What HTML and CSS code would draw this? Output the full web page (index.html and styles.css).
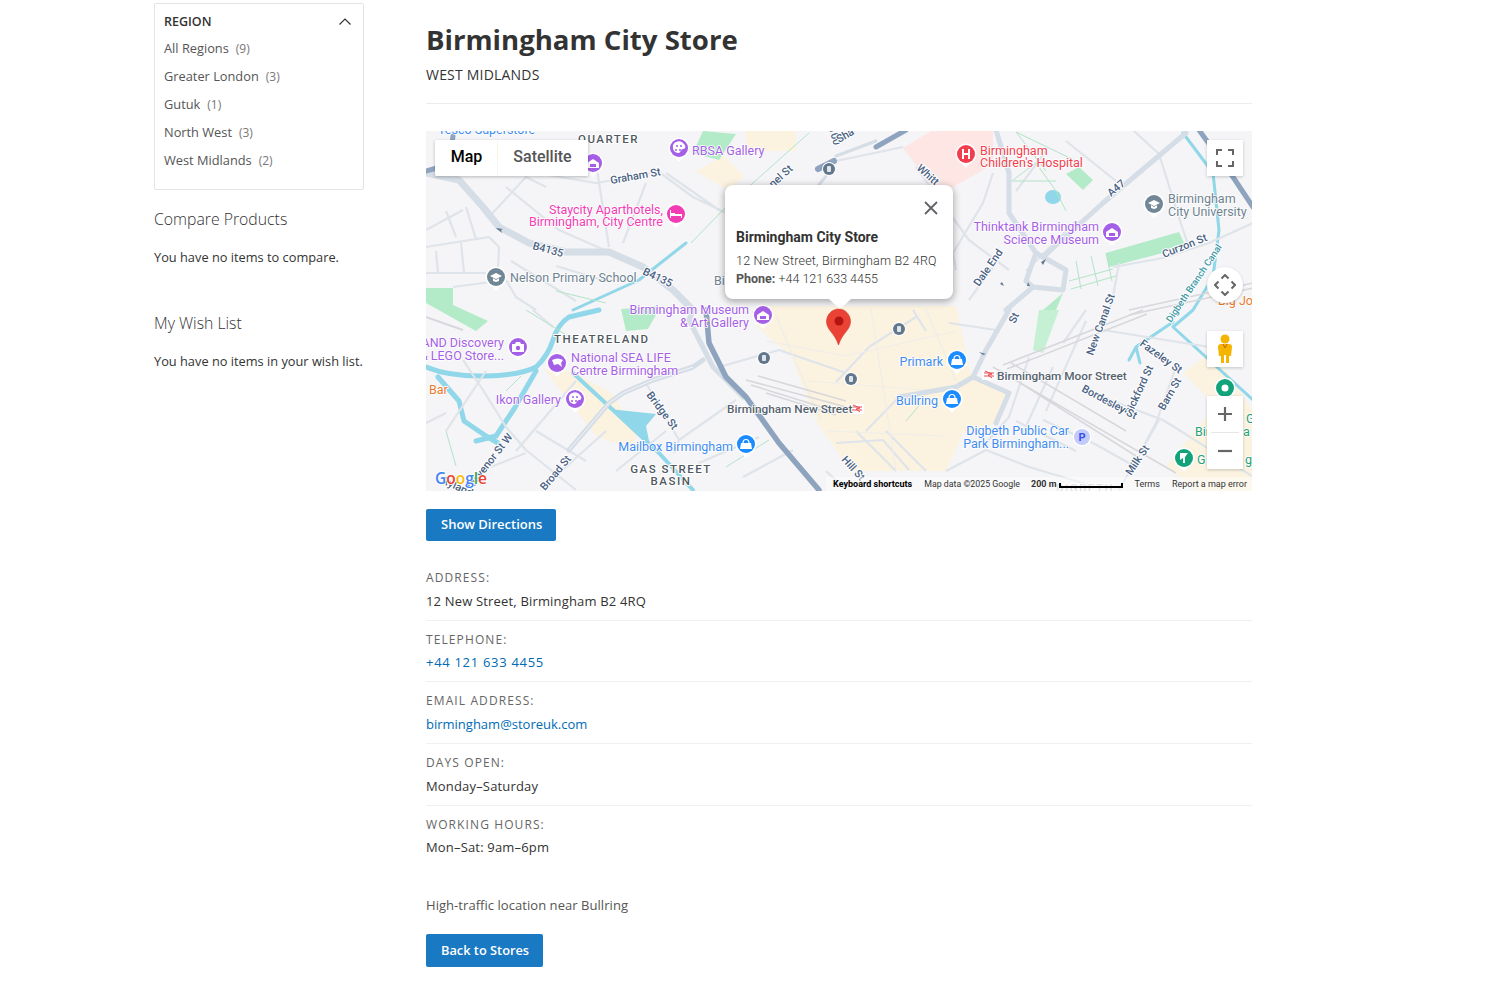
FILE: index.html
```html
<!DOCTYPE html>
<html lang="en">
<head>
<meta charset="utf-8">
<title>Birmingham City Store</title>
<link rel="stylesheet" href="styles.css">
</head>
<body>
<div class="page">
  <aside class="sidebar">
    <section class="filter">
      <div class="filter-head">
        <span>REGION</span>
        <svg class="chev" width="12" height="7" viewBox="0 0 12 7"><path d="M.5 6.500 6 1l5.500 5.500" fill="none" stroke="#333" stroke-width="1.200"/></svg>
      </div>
      <ul class="filter-list">
        <li>All Regions<span class="count">(9)</span></li>
        <li>Greater London<span class="count">(3)</span></li>
        <li>Gutuk<span class="count">(1)</span></li>
        <li>North West<span class="count">(3)</span></li>
        <li>West Midlands<span class="count">(2)</span></li>
      </ul>
    </section>
    <section class="side-block">
      <h3>Compare Products</h3>
      <p>You have no items to compare.</p>
    </section>
    <section class="side-block wish">
      <h3>My Wish List</h3>
      <p>You have no items in your wish list.</p>
    </section>
  </aside>
  <main class="main">
    <h1>Birmingham City Store</h1>
    <div class="region">WEST MIDLANDS</div>
    <hr class="rule">
    <div class="map">
      <svg class="map-art" width="826" height="360" viewBox="0 0 826 360">
        <defs>
          <symbol id="pin" viewBox="-12 -12 24 28" overflow="visible">
            <path d="M-10.500 0a10.500 10.500 0 1 1 21 0c0 5.500-4 9-7 10L0 14l-3.500-4c-3-1-7-4.500-7-10z" fill="#fff"/>
          </symbol>
        </defs>
        <rect width="826" height="360" fill="#f5f4f6"/>
        <!-- land use -->
        <g fill="#fbf3e0">
          <path d="M340 175H530l15 70 38 17-13 30-33 10-17 38H425l-35-50-25-65-35-30z"/>
          <path d="M118 238l27 2 40 22 25 38v20l-40-15z"/>
          <path d="M270 40l28-15 20 20-15 15zM70 15h18v16H70zM320 0h50v20h-50z"/>
          <path d="M783 222 757 242 790 275 740 335 770 360H827V280L800 240z"/>
        </g>
        <path d="M477 17 507-1H567V33L527 56H507z" fill="#fde6e3"/>
        <g fill="#b3ebc9">
          <path d="M277 0 310 3 293 29 267 22z"/>
          <path d="M0 157H27V174L62 190 50 200 0 172z"/>
          <path d="M640 43 653 36 667 49 657 59z"/>
          <path d="M680 122 753 101 760 116 683 136z"/>
          <path d="M617 179 637 162 630 179z"/>
          <path d="M195 178 235 175 222 198 200 200z"/>
        </g>
        <path d="M613 179H633L617 222 607 219z" fill="#c6f0d4"/>
        <!-- water -->
        <g fill="none" stroke="#90d7e9" stroke-linecap="round" stroke-linejoin="round">
          <path stroke-width="5" d="M0 236Q25 246 60 245T110 236Q122 225 127 209T143 186L173 179"/>
          <path stroke-width="5" d="M12 246 33 270 38 290 60 305 72 312M110 240 88 278 70 305 50 310"/>
          <path stroke-width="4" d="M147 242 187 279 233 322 267 359"/>
          <path stroke-width="3" d="M147 179 213 149 260 112"/>
          <path stroke-width="3" d="M757 2 787 42 793 99 787 146 767 179 747 196 827 269"/>
          <path stroke-width="3" d="M747 191 710 216 703 229M710 216 714 232"/>
        </g>
        <path d="M183 278 230 283 220 295 224 315 203 292z" fill="#90d7e9"/>
        <ellipse cx="627" cy="66" rx="8" ry="7" fill="#90d7e9"/>
        <!-- minor streets -->
        <g fill="none" stroke="#dfe4ea" stroke-width="2.200" stroke-linejoin="round">
          <path d="M110 42 170 52 233 41 267 66 300 82M170 32 183 116M63 86 100 46 120 56M80 56 133 99 183 121M0 99 37 79M220 52 197 112M240 42 293 79M0 116 63 106 73 116 72 139M0 142 60 142M80 149 90 166 110 179M27 156 80 149M20 80 30 106M40 76 50 108M10 120 12 142M35 112 38 142M85 130 150 170M130 135 180 150"/>
          <path d="M0 186 37 199M127 196 107 179M37 229 57 259 80 296 100 319 150 359M0 292 20 282M100 322 57 339 40 359M220 252 253 309M248 322 253 309 310 269M273 332 333 306M317 346 367 319M293 236 353 219 420 242M190 340 240 300M160 330 110 300M60 240 20 300M150 250 90 320M180 300 130 345"/>
          <path d="M490 36 543 109 583 139M477 16 410 30M567 42 557 72 527 122 530 139M570 132 543 169M707-1 733 23 757 99 763 116M693 132 687 166 680 190M687 136 737 127 783 112 827 92M620 20 590 60M640 10 690 50M650 90 600 140"/>
          <path d="M523 192 570 199M487 179 500 200M443 216 410 251M490 186 443 216M530 256 473 266 440 300M603 226 583 286 560 312M627 236 597 302M637 212 660 179M677 199 783 216M750 236 730 292 703 342M657 259 737 289 826 345M617 289 667 312 710 336M560 319 603 336 670 356M410 312 457 309 483 339M733 289 693 359M520 340 560 319"/>
          <path d="M660 190 620 280M590 290 650 320M400 340 420 359M430 300 470 340M460 300 500 340"/>
        </g>
        <g fill="none" stroke="#efedea" stroke-width="1.200">
          <path d="M340 210 420 225 530 200M380 250 510 260M400 300 520 305M445 178 470 340M500 178 530 250M350 185 395 290"/>
        </g>
        <g fill="none" stroke="#b2e4c8" stroke-width="1">
          <path d="M265 112 300 76 383 2M587 49 610 32 630 60 640 80M590 1 620 40M584 50 630 50M590 1 650 30"/>
          <path d="M643 150 687 138M645 158 690 145M650 130 655 158M665 125 672 155M680 122 686 150"/>
          <path d="M130 160 180 172M100 179 150 210M300 336 343 309M95 245 80 260M30 335 20 300M497 270 480 290"/>
        </g>
        <!-- railway -->
        <g fill="none" stroke="#d7d7dc" stroke-width="1.500">
          <path d="M320 249 420 276M325 254 415 282M332 245 420 270M340 262 410 284"/>
          <path d="M577 234 717 179M581 238 721 183M567 236 710 319 750 342M575 240 710 325M585 232 700 300"/>
          <path d="M703 179 827 152M703 184 827 157M0 186 37 199"/>
        </g>
        <!-- arterial roads -->
        <g fill="none" stroke="#d5dde6" stroke-linejoin="round" stroke-linecap="round">
          <path stroke-width="7" d="M0 42 33 49 57 76 73 96 103 112 140 121 183 121 217 136 247 159 267 179"/>
          <path stroke-width="5" d="M267 179 263 189 287 236 317 266"/>
          <path stroke-width="5" d="M617 126 677 72 760 2"/>
          <path stroke-width="5" d="M570-1 583 42 583 82 610 122 617 126 640 139 637 159 607 156 580 179M610 122 600 150 607 156"/>
          <path stroke-width="5" d="M583 179 560 219 547 246 583 262 570 292M547 246 530 256 473 266"/>
          <path stroke-width="5" d="M143 319 183 272 197 262 227 249 267 236 277 229"/>
          <path stroke-width="3" d="M410 25 450 10M400 45 380 70 370 85"/>
        </g>
        <path d="M143 319 183 272 197 262 227 249 267 236" fill="none" stroke="#f5f4f6" stroke-width="1"/>
        <g fill="none" stroke="#8ea3be" stroke-linejoin="round" stroke-linecap="round">
          <path stroke-width="5.500" d="M280 179 283 212 300 246 320 266 353 312 393 359"/>
          <path stroke-width="5" d="M450 16 480-1"/>
          <path stroke-width="5" d="M773-1 807 46 827 76"/>
          <path stroke-width="5" d="M0 40 14 36 25 20 27 5"/>
          <path stroke-width="6" d="M392 38 408 30"/>
        </g>
        <g fill="#637a92">
          <path d="M70 97l7 1-2 1 1 3-5-4zM620 128l-3 6-2-3zM578 155l-4-2 2-2zM604 155h-3l1-4zM553 221l7 2-3 1zM570 242l7 2-3 1z"/>
        </g>

        <!-- road labels -->
        <g class="road">
          <text transform="translate(185 53) rotate(-10)">Graham St</text>
          <text transform="translate(106 118) rotate(15)">B4135</text>
          <text transform="translate(216 143) rotate(25)">B4135</text>
          <text transform="translate(490 38) rotate(42)">Whitt</text>
          <text transform="translate(685 66) rotate(-40)">A47</text>
          <text transform="translate(738 127) rotate(-22)">Curzon St</text>
          <text transform="translate(553 156) rotate(-55)">Dale End</text>
          <text transform="translate(667 225) rotate(-70)">New Canal St</text>
          <text transform="translate(713 214) rotate(36)">Fazeley St</text>
          <text transform="translate(705 285) rotate(-65)">Pickford St</text>
          <text transform="translate(738 280) rotate(-60)">Barn St</text>
          <text transform="translate(655 260) rotate(28)">Bordesley St</text>
          <text transform="translate(705 345) rotate(-56)">Milk St</text>
          <text transform="translate(415 329) rotate(48)">Hill St</text>
          <text transform="translate(220 264) rotate(53)">Bridge St</text>
          <text transform="translate(119 360) rotate(-50)">Broad St</text>
          <text transform="translate(41 365) rotate(-52)">Grosvenor St W</text>
          <text transform="translate(15 352) rotate(25)">Ryland</text>
          <text transform="translate(403 -3) rotate(75)">100</text>
          <text transform="translate(413 12) rotate(-30)">Sha</text>
          <text transform="translate(347 57) rotate(-42)">nel St</text>
          <text transform="translate(589 193) rotate(-65)">St</text>
        </g>
        <text class="road canal" transform="translate(745 192) rotate(-56)">Digbeth Branch Canal</text>

        <!-- district labels -->
        <g class="district">
          <text x="152" y="12">QUARTER</text>
          <text x="128" y="212">THEATRELAND</text>
          <text x="245" y="342" text-anchor="middle">GAS STREET</text>
          <text x="245" y="354" text-anchor="middle">BASIN</text>
          <text class="faint" x="630" y="361">DIGBETH</text>
        </g>

        <!-- POI: purple -->
        <g class="poi purple">
          <use href="#pin" x="241" y="5" width="24" height="28"/><circle cx="253" cy="17" r="9"/>
          <use href="#pin" x="155" y="20" width="24" height="28"/><circle cx="167" cy="32" r="9"/>
          <use href="#pin" x="674" y="89" width="24" height="28"/><circle cx="686" cy="101" r="9"/>
          <use href="#pin" x="325" y="172" width="24" height="28"/><circle cx="337" cy="184" r="9"/>
          <use href="#pin" x="80" y="204" width="24" height="28"/><circle cx="92" cy="216" r="9"/>
          <use href="#pin" x="119" y="220" width="24" height="28"/><circle cx="131" cy="232" r="9"/>
          <use href="#pin" x="137" y="256" width="24" height="28"/><circle cx="149" cy="268" r="9"/>
        </g>
        <g fill="#fff">
          <path d="M247 17a6 5.500 0 0 1 11-4c2 2 2 5-1 5-2 0-2 3-4 4-3 0-6-2-6-5z"/>
          <path d="M143 268a6 5.500 0 0 1 11-4c2 2 2 5-1 5-2 0-2 3-4 4-3 0-6-2-6-5z"/>
          <path d="M161 32l6-4 6 4v5h-12zM680 101l6-4 6 4v5h-12zM331 184l6-4 6 4v5h-12z"/>
          <path d="M86 213h3l1-2h4l1 2h3v8H86z"/>
          <path d="M126 229q6-3 11 0l-2 3 1 4-4-3-4 1z"/>
        </g>
        <g fill="#a55fe6">
          <circle cx="251" cy="15" r="1"/><circle cx="255" cy="15" r="1"/><circle cx="250" cy="19" r="1"/><circle cx="254" cy="19" r="1"/>
          <circle cx="147" cy="266" r="1"/><circle cx="151" cy="266" r="1"/><circle cx="146" cy="270" r="1"/><circle cx="150" cy="270" r="1"/>
          <rect x="164" y="33" width="6" height="3"/><rect x="683" y="102" width="6" height="3"/><rect x="334" y="185" width="6" height="3"/>
          <circle cx="92" cy="217" r="2.200"/>
        </g>
        <!-- POI: other colours -->
        <g class="poi pink"><use href="#pin" x="238" y="71" width="24" height="28"/><circle cx="250" cy="83" r="9"/></g>
        <path d="M244 79v8h1v-2h10v2h1v-4h-7v-1h-4v-3z" fill="#fff"/>
        <g class="poi red"><use href="#pin" x="528" y="11" width="24" height="28"/><circle cx="540" cy="23" r="9"/></g>
        <path d="M536 18h2v4h4v-4h2v10h-2v-4h-4v4h-2z" fill="#fff"/>
        <g class="poi grey">
          <use href="#pin" x="716" y="61" width="24" height="28"/><circle cx="728" cy="73" r="9"/>
          <use href="#pin" x="58" y="134" width="24" height="28"/><circle cx="70" cy="146" r="9"/>
        </g>
        <path d="M722 72l6-3 6 3-6 3zM725 74v3l3 1 3-1v-3l-3 2zM64 145l6-3 6 3-6 3zM67 147v3l3 1 3-1v-3l-3 2z" fill="#fff"/>
        <g class="poi blue">
          <use href="#pin" x="308" y="301" width="24" height="28"/><circle cx="320" cy="313" r="9"/>
          <use href="#pin" x="519" y="217" width="24" height="28"/><circle cx="531" cy="229" r="9"/>
          <use href="#pin" x="514" y="256" width="24" height="28"/><circle cx="526" cy="268" r="9"/>
        </g>
        <path d="M315 312h10l1 6h-12zM526 228h10l1 6h-12zM521 267h10l1 6h-12z" fill="#fff"/>
        <path d="M317 312a3 3.500 0 0 1 6 0M528 228a3 3.500 0 0 1 6 0M523 267a3 3.500 0 0 1 6 0" fill="none" stroke="#fff" stroke-width="1.200"/>
        <g class="poi green">
          <use href="#pin" x="787" y="245" width="24" height="28"/><circle cx="799" cy="257" r="9"/>
          <use href="#pin" x="746" y="315" width="24" height="28"/><circle cx="758" cy="327" r="9"/>
        </g>
        <circle cx="799" cy="257" r="3.500" fill="#fff"/>
        <path d="M754 322h8l-3 4v6h-2v-5l-3 2z" fill="#fff"/>
        <circle cx="656" cy="306" r="9.500" fill="#fff"/><circle cx="656" cy="306" r="8" fill="#c2cbfa"/>
        <text class="p-mark" x="656" y="310" text-anchor="middle">P</text>
        <!-- small transit badges -->
        <g fill="#fff">
          <circle cx="403" cy="38" r="7"/><circle cx="473" cy="198" r="7"/><circle cx="338" cy="227" r="7"/><circle cx="425" cy="248" r="7"/>
        </g>
        <g fill="#62778c">
          <circle cx="403" cy="38" r="6"/><circle cx="473" cy="198" r="6"/><circle cx="338" cy="227" r="6"/><circle cx="425" cy="248" r="6"/>
        </g>
        <g fill="#dfe5ea">
          <rect x="401" y="35" width="4" height="6" rx="1"/><rect x="471" y="195" width="4" height="6" rx="1"/><rect x="336" y="224" width="4" height="6" rx="1"/><rect x="423" y="245" width="4" height="6" rx="1"/>
        </g>
        <!-- rail -->
        <rect x="424" y="273" width="14" height="10" fill="#fff"/><rect x="556" y="239" width="14" height="10" fill="#fff"/>
        <path d="M426 276h10M426 279h10M427 274l7 3-4 1 4 3M558 242h10M558 245h10M559 240l7 3-4 1 4 3" fill="none" stroke="#e84a50" stroke-width="1"/>

        <!-- POI labels -->
        <g class="lbl t-purple">
          <text x="266" y="24">RBSA Gallery</text>
          <text x="673" y="100" text-anchor="end">Thinktank Birmingham</text>
          <text x="673" y="113" text-anchor="end">Science Museum</text>
          <text x="323" y="183" text-anchor="end">Birmingham Museum</text>
          <text x="323" y="196" text-anchor="end">&amp; Art Gallery</text>
          <text x="78" y="216" text-anchor="end">LEGOLAND Discovery</text>
          <text x="78" y="229" text-anchor="end">&amp; LEGO Store...</text>
          <text x="145" y="231">National SEA LIFE</text>
          <text x="145" y="244">Centre Birmingham</text>
          <text x="135" y="273" text-anchor="end">Ikon Gallery</text>
        </g>
        <g class="lbl t-pink">
          <text x="237" y="83" text-anchor="end">Staycity Aparthotels,</text>
          <text x="237" y="95" text-anchor="end">Birmingham, City Centre</text>
        </g>
        <g class="lbl t-red">
          <text x="554" y="24">Birmingham</text>
          <text x="554" y="36">Children's Hospital</text>
        </g>
        <g class="lbl t-grey">
          <text x="742" y="72">Birmingham</text>
          <text x="742" y="85">City University</text>
          <text x="84" y="151">Nelson Primary School</text>
          <text x="288" y="154">Bi</text>
        </g>
        <g class="lbl t-blue">
          <text x="12" y="3">Tesco Superstore</text>
          <text x="307" y="320" text-anchor="end">Mailbox Birmingham</text>
          <text x="517" y="235" text-anchor="end">Primark</text>
          <text x="512" y="274" text-anchor="end">Bullring</text>
          <text x="643" y="304" text-anchor="end">Digbeth Public Car</text>
          <text x="643" y="317" text-anchor="end">Park Birmingham...</text>
        </g>
        <g class="lbl t-orange">
          <text x="3" y="263">Bar</text>
          <text x="792" y="174">Big Jo</text>
        </g>
        <g class="lbl t-green">
          <text x="769" y="305">Bir</text>
          <text x="771" y="333">G</text>
          <text x="820" y="292">G</text>
          <text x="817" y="305">a</text>
          <text x="819" y="333">g</text>
        </g>
        <g class="lbl t-rail">
          <text x="571" y="249">Birmingham Moor Street</text>
          <text x="301" y="282">Birmingham New Street</text>
        </g>

        <text class="glogo" x="9" y="353"><tspan fill="#4285f4">G</tspan><tspan fill="#ea4335">o</tspan><tspan fill="#fbbc05">o</tspan><tspan fill="#4285f4">g</tspan><tspan fill="#34a853">l</tspan><tspan fill="#ea4335">e</tspan></text>
        <!-- pin -->
        <path d="M413 178c-7 0-12.500 5.500-12.500 12.500 0 8.500 8 11 12 23.500 4-12.500 12-15 12-23.500 0-7-5.500-12.500-11.500-12.500z" fill="#ea4335" stroke="#d33a2c" stroke-width=".6"/>
        <circle cx="413" cy="190" r="4.500" fill="#b31412"/>
      </svg>

      <div class="map-type">
        <span class="mt-btn mt-active">Map</span>
        <span class="mt-btn mt-sat">Satellite</span>
      </div>
      <button class="ctl ctl-full" aria-label="Fullscreen">
        <svg width="18" height="18" viewBox="0 0 18 18"><path d="M1 6V1h5M12 1h5v5M17 12v5h-5M6 17H1v-5" fill="none" stroke="#666" stroke-width="2"/></svg>
      </button>
      <div class="ctl-move">
        <svg width="22" height="22" viewBox="0 0 22 22"><path d="M7.500 4.500 11 1l3.500 3.500M17.500 7.500 21 11l-3.500 3.500M14.500 17.500 11 21l-3.500-3.500M4.500 14.500 1 11l3.500-3.500" fill="none" stroke="#666" stroke-width="2"/></svg>
      </div>
      <div class="ctl ctl-peg">
        <svg width="16" height="30" viewBox="0 0 16 30"><circle cx="8" cy="5" r="4.500" fill="#f5b400"/><path d="M4 10h8q3 0 3 3l-1 9-2 0v7H9v-8H7v8H4v-7l-2 0-1-9q0-3 3-3z" fill="#f5b400"/><path d="M6 10l2 4 2-4" fill="none" stroke="#c5691b" stroke-width="1"/></svg>
      </div>
      <div class="ctl-zoom">
        <span class="zoom-btn"><svg width="16" height="16" viewBox="0 0 16 16"><path d="M1 8h14M8 1v14" stroke="#666" stroke-width="2.200"/></svg></span>
        <span class="zoom-sep"></span>
        <span class="zoom-btn"><svg width="16" height="16" viewBox="0 0 16 16"><path d="M1 8h14" stroke="#666" stroke-width="2.200"/></svg></span>
      </div>

      <div class="info">
        <svg class="info-x" width="14" height="14" viewBox="0 0 14 14"><path d="M1 1l12 12M13 1 1 13" stroke="#5f6368" stroke-width="1.800"/></svg>
        <div class="info-title">Birmingham City Store</div>
        <div class="info-line info-addr">12 New Street, Birmingham B2 4RQ</div>
        <div class="info-line"><b>Phone:</b> +44 121 633 4455</div>
        <span class="info-tail"></span>
      </div>

      <div class="map-foot">
        <span class="mf-strong">Keyboard shortcuts</span>
        <span class="mf-data">Map data ©2025 Google</span>
        <span class="scale"><b>200 m</b><i class="scale-bar"></i></span>
        <span class="mf-terms">Terms</span>
        <span>Report a map error</span>
      </div>
    </div>

    <a class="btn btn-dir" href="#">Show Directions</a>

    <div class="detail">
      <div class="label">ADDRESS:</div>
      <div class="value">12 New Street, Birmingham B2 4RQ</div>
    </div>
    <div class="detail">
      <div class="label">TELEPHONE:</div>
      <div class="value phone"><a href="#">+44 121 633 4455</a></div>
    </div>
    <div class="detail">
      <div class="label">EMAIL ADDRESS:</div>
      <div class="value email"><a href="#">birmingham@storeuk.com</a></div>
    </div>
    <div class="detail">
      <div class="label">DAYS OPEN:</div>
      <div class="value">Monday–Saturday</div>
    </div>
    <div class="detail last">
      <div class="label">WORKING HOURS:</div>
      <div class="value">Mon–Sat: 9am–6pm</div>
    </div>
    <p class="note">High-traffic location near Bullring</p>
    <a class="btn" href="#">Back to Stores</a>
  </main>
</div>
</body>
</html>
```
FILE: styles.css
```css
* { box-sizing: border-box; }
html, body { margin: 0; padding: 0; }
body { background: #fff; color: #333; font-family: "Open Sans", sans-serif; font-size: 13px; height: 986px; overflow: hidden; }
.page { display: flex; padding: 3px 0 0 154px; gap: 62px; }
.sidebar { width: 210px; flex: none; }
.filter { border: 1px solid #e4e4e4; border-radius: 2px; height: 187px; padding: 7px 9px; }
.filter-head { display: flex; justify-content: space-between; align-items: center; height: 20px; font-size: 12.500px; font-weight: 600; color: #333; }
.chev { margin-right: 3px; }
.filter-list { list-style: none; margin: 3px 0 0; padding: 0; }
.filter-list li { height: 28px; line-height: 28px; font-size: 12.800px; color: #555; }
.count { margin-left: 7px; color: #777; font-size: 12px; }
.side-block h3 { margin: 0; font-size: 15.800px; font-weight: 300; line-height: 22px; color: #333; padding-top: 18px; }
.side-block p { margin: 17px 0 0; font-size: 12.800px; line-height: 20px; color: #333; white-space: nowrap; }
.wish { padding-top: 27px; }
.main { width: 826px; flex: none; }
h1 { margin: 0; padding-top: 18px; font-size: 27.600px; line-height: 36px; font-weight: 700; color: #333; }
.region { margin-top: 8px; font-size: 14px; line-height: 20px; color: #333; letter-spacing: .2px; }
.rule { margin: 18px 0 27px; border: 0; border-top: 1px solid #ececec; }
.map { position: relative; width: 826px; height: 360px; overflow: hidden; font-family: Roboto, sans-serif; }
.map-art { display: block; }
.road text, .road { font: 500 10.800px Roboto, sans-serif; fill: #4a6284; paint-order: stroke; stroke: #fff; stroke-width: 2px; }
.canal { fill: #3f9aa8; font-size: 9.500px; }
.district text { font: 500 11.500px Roboto, sans-serif; letter-spacing: 1.500px; fill: #505860; paint-order: stroke; stroke: #fff; stroke-width: 2px; }
.district .faint { fill: #c4c6ca; }
.lbl text { font: 400 12.500px Roboto, sans-serif; paint-order: stroke; stroke: #fff; stroke-width: 1.500px; }
.t-purple text { fill: #a55fe6; }
.t-pink text { fill: #f23cb5; }
.t-red text { fill: #f0404f; }
.t-grey text { fill: #6d8290; }
.t-blue text { fill: #3f8cf0; }
.t-orange text { fill: #ea7b2e; }
.t-green text { fill: #25a27a; }
.lbl.t-rail text { fill: #55626e; font-weight: 500; font-size: 11.800px; }
.purple circle { fill: #a55fe6; }
.pink circle { fill: #f23cb5; }
.red circle { fill: #f03e4e; }
.grey circle { fill: #718796; }
.blue circle { fill: #1a8cff; }
.green circle { fill: #12a37b; }
.p-mark { font: 700 11px Roboto, sans-serif; fill: #3c50ee; }
.glogo { font: 600 15.500px "Open Sans", sans-serif; paint-order: stroke; stroke: #fff; stroke-width: 1.500px; }
.map-type { position: absolute; left: 9px; top: 9px; display: flex; gap: 1px; height: 36px; box-shadow: 0 1px 3px rgba(0,0,0,.25); }
.mt-btn { display: flex; align-items: center; justify-content: center; background: #fff; font-size: 16px; font-weight: 500; height: 36px; padding-bottom: 4px; }
.mt-active { width: 62px; color: #000; border-radius: 2px 0 0 2px; padding-left: 1px; }
.mt-sat { width: 90px; color: #555; border-radius: 0 2px 2px 0; padding-right: 1px; }
.ctl { position: absolute; left: 781px; width: 36px; height: 36px; background: #fff; border: 0; padding: 0; display: flex; align-items: center; justify-content: center; box-shadow: 0 1px 3px rgba(0,0,0,.2); }
.ctl-full { top: 9px; }
.ctl-peg { top: 200px; }
.ctl-move { position: absolute; left: 781px; top: 136px; width: 36px; height: 36px; border-radius: 50%; background: #fff; display: flex; align-items: center; justify-content: center; box-shadow: 0 1px 3px rgba(0,0,0,.2); }
.ctl-zoom { position: absolute; left: 781px; top: 265px; width: 36px; height: 73px; background: #fff; display: flex; flex-direction: column; box-shadow: 0 1px 3px rgba(0,0,0,.2); }
.zoom-btn { height: 36px; display: flex; align-items: center; justify-content: center; }
.zoom-sep { height: 1px; margin: 0 4px; background: #e6e6e6; }
.info { position: absolute; left: 299px; top: 54px; width: 228px; height: 114px; background: #fff; border-radius: 8px; box-shadow: 0 2px 7px 1px rgba(0,0,0,.3); padding: 43px 11px 0; }
.info-x { position: absolute; right: 15px; top: 16px; }
.info-title { font-size: 14px; font-weight: 700; line-height: 18px; color: #333; margin-bottom: 6px; }
.info-line { font-size: 12.500px; font-weight: 300; line-height: 18px; color: #333; }
.info-addr { letter-spacing: .22px; }
.info-line b { font-weight: 700; color: #555; }
.info-tail { position: absolute; left: 104px; bottom: -10px; border: 11px solid transparent; border-bottom: 0; border-top: 10px solid #fff; }
.map-foot { position: absolute; right: 0; bottom: 0; left: 400px; height: 14px; padding-right: 5px; display: flex; align-items: center; justify-content: flex-end; gap: 11px; font-size: 9px; color: #333; background: rgba(255,255,255,.45); white-space: nowrap; }
.mf-strong { font-weight: 700; color: #000; margin-right: 1px; }
.mf-data { font-size: 8.800px; }
.mf-terms { margin-right: 1px; }
.scale { display: flex; align-items: center; gap: 2px; margin-right: 1px; }
.scale b { font-weight: 700; }
.scale-bar { display: block; width: 64px; height: 5px; margin-top: 2px; border: 2px solid #000; border-top: 0; }
.btn { display: block; width: max-content; background: #1979c3; color: #fff; font-size: 12.800px; font-weight: 600; line-height: 33px; padding: 0 14px 0 15px; border-radius: 2px; text-decoration: none; }
.btn-dir { margin: 18px 0 18px; height: 32px; line-height: 31px; font-size: 13px; }
.detail { height: 61.700px; padding-top: 8px; border-bottom: 1px solid #f0f0f0; }
.detail.last { border: 0; }
.label { font-size: 12px; line-height: 21.650px; letter-spacing: 1.100px; color: #666; }
.value { font-size: 13px; line-height: 24px; color: #333; letter-spacing: .17px; }
.phone { letter-spacing: .7px; }
.email { letter-spacing: 0; }
.value a { color: #006bb4; text-decoration: none; }
.note { margin: 27.500px 0 19px; font-size: 13px; line-height: 20px; letter-spacing: .05px; color: #555; }
```
